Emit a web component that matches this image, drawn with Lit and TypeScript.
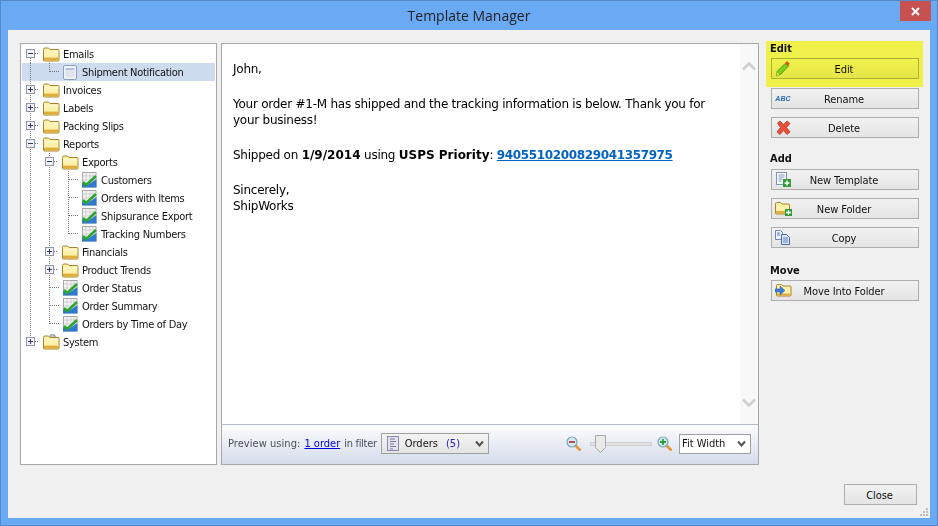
import { LitElement, html, css, svg } from "lit";
import { customElement } from "lit/decorators.js";

const folder = (gear = false) => svg`<svg width="17" height="16" viewBox="0 0 17 16">
  ${gear ? svg`<circle cx="9.500" cy="3.500" r="3" fill="#c4c8d0" stroke="#8a8f99"/>` : ""}
  <path d="M.5 14V3.500q0-1.500 1.500-1.500h3.500l1.500 1.500h8q1 0 1 1V14q0 1-1 1H1.500q-1 0-1-1z" fill="#fdf1ab" stroke="#a5842a"/>
  <path d="M1 6h14.500" stroke="#fffbe0"/>
  <path d="M1 11h14.500v1H1z" fill="#f3d777"/>
  <path d="M1 12h14.500v2.500H1z" fill="#dfae3c"/>
</svg>`;
const doc = () => svg`<svg width="15" height="15" viewBox="0 0 15 15">
  <rect x=".5" y=".5" width="13" height="14" rx="1.500" fill="#f1f4fb" stroke="#8d9cc0"/>
  <rect x="2.500" y="3" width="9" height="2" fill="#b4c0db"/><rect x="2.500" y="5" width="9" height="7.500" fill="#dfe4f0"/>
</svg>`;
const chart = () => svg`<svg width="15" height="16" viewBox="0 0 15 16">
  <rect x=".5" y=".5" width="13.500" height="14.500" fill="#f6f6f6" stroke="#a9a9a9"/>
  <path d="M4 1v14M8 1v14M11 1v14M1 4h13M1 8h13" stroke="#cfcfcf"/>
  <path d="M0 15.500V11l4 2 3-1 7.500-5v8.500z" fill="#2f79cf"/>
  <path d="M1 10l3 3 4-3.500 6-5.500" fill="none" stroke="#2ba52b" stroke-width="2.500"/>
</svg>`;
const pencil = () => svg`<svg width="16" height="17" viewBox="0 0 16 17">
  <path d="M1.500 16l.7-4.500L10 3.500l3.500 2.500-7.500 8z" fill="#7fd04a" stroke="#3f8f2b" stroke-width=".8"/>
  <path d="M10 3.500l2-2.500 2.500 2.500-1 2.500z" fill="#e0552b"/>
  <path d="M1.500 16l.6-3.500 2.400 2z" fill="#f3e0a8"/>
</svg>`;
const redx = () => svg`<svg width="15" height="15" viewBox="0 0 15 15">
  <path d="M1.500 3L4 1l3.500 3.500L11 1l3 2.500L10.500 7.500 14 12l-3 2.500L7.500 10.500 4 14.500 1 12l3.500-4.500z" fill="#e8503a" stroke="#b83a2b" stroke-width=".8"/>
</svg>`;
const newTpl = () => svg`<svg width="15" height="15" viewBox="0 0 15 15">
  <rect x=".5" y=".5" width="10" height="12" fill="#f4f7fc" stroke="#7f93b8"/>
  <path d="M2.500 3h6M2.500 5h6M2.500 7h4M2.500 9h3" stroke="#8da0c0"/>
  <rect x="7" y="7" width="8" height="8" fill="#2f9d36"/><path d="M11 8.500v5M8.500 11h5" stroke="#fff" stroke-width="1.500"/>
</svg>`;
const newFolder = () => svg`<svg width="17" height="15" viewBox="0 0 17 15">
  <path d="M.5 12V2.500q0-1 1-1h4L7 3h6.500q1 0 1 1v8q0 1-1 1h-12q-1 0-1-1z" fill="#fdf1ab" stroke="#a5842a"/>
  <path d="M1 10h13v2.500H1z" fill="#dfae3c"/>
  <rect x="10" y="8" width="7" height="7" fill="#2f9d36"/><path d="M13.500 9v5M11 11.500h5" stroke="#fff" stroke-width="1.300"/>
</svg>`;
const copy = () => svg`<svg width="16" height="15" viewBox="0 0 16 15">
  <path d="M.5.500h5l2 2v7h-7z" fill="#eef3fb" stroke="#6d85b5"/>
  <path d="M6.500 4.500h5l3 3v7h-8z" fill="#dfe8f7" stroke="#4a6cae"/>
  <path d="M2 3h3M2 5h3M8 8h5M8 10h5M8 12h5" stroke="#5b7fc0"/>
</svg>`;
const moveFolder = () => svg`<svg width="17" height="15" viewBox="0 0 17 15">
  <path d="M1.500 12V2.500q0-1 1-1h4L8 3h7q1 0 1 1v8q0 1-1 1H2.500q-1 0-1-1z" fill="#fdf1ab" stroke="#a5842a"/>
  <path d="M2 10.500h13.500v2H2z" fill="#dfae3c"/>
  <path d="M0 6h5V3l5 4.500L5 12V9H0z" fill="#3f7fdc" stroke="#2a5aa8" stroke-width=".5"/>
</svg>`;
const zoomIcon = (plus: boolean) => svg`<svg width="16" height="16" viewBox="0 0 16 16">
  <path d="M9.500 9.500l5 5" stroke="#e8953a" stroke-width="2.500"/>
  <circle cx="6" cy="6" r="5" fill="#d4e8f0" stroke="#7fa3b5" stroke-width="1.200"/>
  ${plus
    ? svg`<path d="M6 3v6M3 6h6" stroke="#2a9d36" stroke-width="1.800"/>`
    : svg`<path d="M3 6h6" stroke="#c03a3a" stroke-width="1.800"/>`}
</svg>`;
const filterIcon = () => svg`<svg width="12" height="15" viewBox="0 0 12 15">
  <rect x=".5" y=".5" width="11" height="14" fill="#e4e4ee" stroke="#8a8aa8"/>
  <path d="M3 3h5M3 5.500h6M3 8h4M3 10.500h6M3 13h3" stroke="#77779a"/>
</svg>`;
const chevron = (w: number, h: number, color: string, sw: number) => svg`<svg width="${w}" height="${h}" viewBox="0 0 ${w} ${h}">
  <path d="M1 1.500L${w / 2} ${h - 1.500}L${w - 1} 1.500" fill="none" stroke="${color}" stroke-width="${sw}"/>
</svg>`;

type Kind = "folder" | "gear" | "doc" | "chart";
interface Row { label: string; guides: boolean[]; last?: boolean; toggle?: "+" | "-"; kind: Kind; sel?: boolean; }

const rows: Row[] = [
  { label: "Emails", guides: [], toggle: "-", kind: "folder" },
  { label: "Shipment Notification", guides: [true], last: true, kind: "doc", sel: true },
  { label: "Invoices", guides: [], toggle: "+", kind: "folder" },
  { label: "Labels", guides: [], toggle: "+", kind: "folder" },
  { label: "Packing Slips", guides: [], toggle: "+", kind: "folder" },
  { label: "Reports", guides: [], toggle: "-", kind: "folder" },
  { label: "Exports", guides: [true], toggle: "-", kind: "folder" },
  { label: "Customers", guides: [true, true], kind: "chart" },
  { label: "Orders with Items", guides: [true, true], kind: "chart" },
  { label: "Shipsurance Export", guides: [true, true], kind: "chart" },
  { label: "Tracking Numbers", guides: [true, true], last: true, kind: "chart" },
  { label: "Financials", guides: [true], toggle: "+", kind: "folder" },
  { label: "Product Trends", guides: [true], toggle: "+", kind: "folder" },
  { label: "Order Status", guides: [true], kind: "chart" },
  { label: "Order Summary", guides: [true], kind: "chart" },
  { label: "Orders by Time of Day", guides: [true], last: true, kind: "chart" },
  { label: "System", guides: [], toggle: "+", kind: "gear" },
];

const dots = "#777";
const vline = (from = 0, to = 18) => svg`<path d="M8.500 ${from}V${to}" stroke="${dots}" stroke-dasharray="1 1"/>`;
const guideCell = (on: boolean) => html`<svg class="cell" width="19" height="18">${on ? vline() : ""}</svg>`;
const toggleCell = (r: Row, i: number) => {
  const first = i === 0;
  const endRoot = r.label === "System";
  if (r.toggle) {
    return html`<svg class="cell" width="19" height="18">
      ${vline(first ? 9 : 0, endRoot ? 9 : 18)}
      <path d="M13 8.500h4" stroke="${dots}" stroke-dasharray="1 1"/>
      <rect x="4.500" y="4.500" width="8" height="8" fill="#f2f2f6" stroke="#8f96a8"/>
      <path d="M6 8.500h5${r.toggle === "+" ? "M8.500 6v5" : ""}" stroke="#2d3a6a"/>
    </svg>`;
  }
  return html`<svg class="cell" width="19" height="18">
    ${vline(0, r.last ? 9 : 18)}
    <path d="M9 8.500h9" stroke="${dots}" stroke-dasharray="1 1"/>
  </svg>`;
};
const icon = (k: Kind) => k === "folder" ? folder() : k === "gear" ? folder(true) : k === "doc" ? doc() : chart();

@customElement("app-root")
export class AppRoot extends LitElement {
  static styles = css`
    :host { display: block; width: 938px; height: 526px; font-family: "DejaVu Sans", sans-serif; font-stretch: condensed; font-size: 11px; color: #000; }
    .window { width: 938px; height: 526px; box-sizing: border-box; background: #6aa9f4; border: 1px solid #5489c8; display: flex; flex-direction: column; padding: 0 7px 7px; }
    .titlebar { height: 29px; flex: none; display: flex; align-items: flex-start; position: relative; }
    .title { flex: 1; text-align: center; font-size: 14px; line-height: 29px; color: #222; font-family: "Open Sans", sans-serif; font-stretch: normal; }
    .x { position: absolute; right: -1px; top: 0; width: 31px; height: 20px; background: #c75050; display: flex; align-items: center; justify-content: center; }
    .client { flex: 1; background: #f0f0f0; padding: 13px 11px 13px 12px; display: flex; flex-direction: column; position: relative; }
    .main { display: flex; height: 422px; flex: none; }
    .tree { width: 197px; flex: none; box-sizing: border-box; border: 1px solid #a8a8a8; background: #fff; padding: 1px; }
    .row { height: 18px; display: flex; align-items: center; width: 193px; }
    .row.sel { background: #cddcef; }
    .cell { flex: none; display: block; }
    .ticon { width: 22px; flex: none; padding-left: 2px; box-sizing: border-box; display: flex; align-items: center; height: 18px; }
    .ticon.p { padding-left: 3px; }
    .ticon svg, .ibox svg { display: block; }
    .row span { white-space: nowrap; color: #111; letter-spacing: -.28px; }
    .preview { width: 538px; flex: none; margin-left: 4px; box-sizing: border-box; border: 1px solid #a8a8a8; background: #fff; display: flex; flex-direction: column; }
    .doc-wrap { flex: 1; display: flex; min-height: 0; }
    .doc { flex: 1; padding: 17px 0 0 11px; font-size: 12px; line-height: 16px; font-stretch: normal; letter-spacing: -.25px; }
    .doc p { margin: 0 0 19px; width: 490px; }
    .doc b { letter-spacing: 0; }
    .doc a { color: #0563c1; font-weight: bold; letter-spacing: -.36px; }
    .scroll { width: 18px; flex: none; background: #f8f8f8; display: flex; flex-direction: column; justify-content: space-between; align-items: center; padding: 18px 0 17px; box-sizing: border-box; }
    .scroll svg { display: block; }
    .up { transform: rotate(180deg); }
    .bar { height: 40px; flex: none; box-sizing: border-box; border-top: 1px solid #b5bcc9; background: linear-gradient(#fbfcfe, #d5dcea); display: flex; align-items: center; padding: 0 7px 2px 6px; color: #4a4f5a; }
    .bar .pv { letter-spacing: .05px; }
    .bar .inf { letter-spacing: -.3px; }
    .bar a { color: #0000e0; text-decoration: underline; margin: 0 4px 0 4px; }
    .combo { margin-left: 4px; width: 108px; height: 21px; box-sizing: border-box; border: 1px solid #a0a0a0; background: linear-gradient(#f4f4f4, #e4e4e4); display: flex; align-items: center; padding: 0 4px 0 5px; color: #111; }
    .combo svg { display: block; flex: none; }
    .combo .n { margin-left: 6px; }
    .combo .c { margin-left: 8px; color: #2222bb; flex: 1; }
    .zoom { margin-left: auto; display: flex; align-items: center; }
    .zoom svg { display: block; }
    .slider { width: 62px; height: 20px; margin: 0 5px 0 8px; position: relative; display: flex; align-items: center; }
    .track { width: 100%; height: 4px; background: #e2e2e2; border: 1px solid #d0d0d0; box-sizing: border-box; }
    .thumb { position: absolute; left: 5px; top: 1px; }
    .fit { margin-left: 6px; width: 72px; height: 20px; box-sizing: border-box; border: 1px solid #a0a0a0; background: #fff; display: flex; align-items: center; justify-content: space-between; padding: 0 4px 0 2px; color: #111; }
    .side { width: 148px; flex: none; margin-left: 12px; display: flex; flex-direction: column; gap: 8px; position: relative; }
    .lbl { font-weight: bold; height: 15px; line-height: 11px; margin-bottom: -8px; color: #111; margin-left: -1px; }
    .lbl.n { margin-top: 7px; height: 16px; }
    .lbl.m { margin-top: 9px; }
    .btn { height: 21px; flex: none; box-sizing: border-box; border: 1px solid #adadad; background: linear-gradient(#f2f2f2, #e4e4e4); display: flex; align-items: center; position: relative; color: #111; }
    .btn.gap { margin-top: 1px; }
    .btn .ibox { position: absolute; left: 2px; top: 1px; height: 17px; width: 18px; display: flex; align-items: center; justify-content: center; }
    .btn .t { flex: 1; text-align: center; padding: 1px 2px 0 0; letter-spacing: -.1px; }
    .abc { font: italic bold 7px "Liberation Sans", sans-serif; color: #2a6ab5; letter-spacing: .1px; }
    .hl { position: absolute; left: -5px; top: -2px; width: 157px; height: 46px; background: #ffff50; mix-blend-mode: multiply; pointer-events: none; }
    .foot { margin-top: 19px; margin-right: 2px; display: flex; justify-content: flex-end; }
    .close { width: 73px; }
    .grip { position: absolute; right: 1px; bottom: 1px; display: block; }
  `;

  private btn(label: string, ic: unknown, cls = "") {
    return html`<div class="btn ${cls}"><div class="ibox">${ic}</div><div class="t">${label}</div></div>`;
  }

  render() {
    return html`<div class="window">
      <div class="titlebar">
        <div class="title">Template Manager</div>
        <div class="x"><svg width="11" height="9" viewBox="0 0 11 9"><path d="M2 1l7 7M9 1L2 8" stroke="#fff" stroke-width="2"/></svg></div>
      </div>
      <div class="client">
        <div class="main">
          <div class="tree">
            ${rows.map((r, i) => html`<div class="row ${r.sel ? "sel" : ""}">
              ${r.guides.map((_, gi) => guideCell(this.guideOn(i, gi)))}
              ${toggleCell(r, i)}
              <div class="ticon ${r.kind === "doc" || r.kind === "chart" ? "p" : ""}">${icon(r.kind)}</div>
              <span>${r.label}</span>
            </div>`)}
          </div>
          <div class="preview">
            <div class="doc-wrap">
              <div class="doc">
                <p>John,</p>
                <p>Your order #1-M has shipped and the tracking information is below. Thank you for your business!</p>
                <p>Shipped on <b>1/9/2014</b> using <b>USPS Priority</b>: <a href="#">9405510200829041357975</a></p>
                <p>Sincerely,<br />ShipWorks</p>
              </div>
              <div class="scroll">
                <svg class="up" width="14" height="9">${chevron(14, 9, "#cfcfcf", 2.5)}</svg>
                <svg width="14" height="9">${chevron(14, 9, "#cfcfcf", 2.5)}</svg>
              </div>
            </div>
            <div class="bar">
              <span class="pv">Preview using:</span><a href="#">1 order</a><span class="inf">in filter</span>
              <div class="combo">${filterIcon()}<span class="n">Orders</span><span class="c">(5)</span>${chevron(9, 7, "#555", 2)}</div>
              <div class="zoom">
                ${zoomIcon(false)}
                <div class="slider"><div class="track"></div>
                  <svg class="thumb" width="12" height="19" viewBox="0 0 12 19"><path d="M.5.500h10v12l-5 5-5-5z" fill="#e9e9e9" stroke="#a8a8a8"/></svg>
                </div>
                ${zoomIcon(true)}
                <div class="fit"><span>Fit Width</span>${chevron(9, 7, "#555", 2)}</div>
              </div>
            </div>
          </div>
          <div class="side">
            <div class="lbl">Edit</div>
            ${this.btn("Edit", pencil())}
            ${this.btn("Rename", html`<span class="abc">ABC</span>`, "gap")}
            ${this.btn("Delete", redx())}
            <div class="lbl n">Add</div>
            ${this.btn("New Template", newTpl())}
            ${this.btn("New Folder", newFolder())}
            ${this.btn("Copy", copy())}
            <div class="lbl m">Move</div>
            ${this.btn("Move Into Folder", moveFolder())}
            <div class="hl"></div>
          </div>
        </div>
        <div class="foot"><div class="btn close"><div class="t">Close</div></div></div>
        <svg class="grip" width="9" height="9" viewBox="0 0 9 9" fill="#bdbdbd">
          <rect x="6" y="0" width="2" height="2"/><rect x="3" y="3" width="2" height="2"/><rect x="6" y="3" width="2" height="2"/>
          <rect x="0" y="6" width="2" height="2"/><rect x="3" y="6" width="2" height="2"/><rect x="6" y="6" width="2" height="2"/>
        </svg>
      </div>
    </div>`;
  }

  // A guide column is drawn on a row only while that ancestor still has later siblings below.
  private guideOn(i: number, col: number) {
    if (col === 0) return true;
    return i >= 7 && i <= 10;
  }
}
